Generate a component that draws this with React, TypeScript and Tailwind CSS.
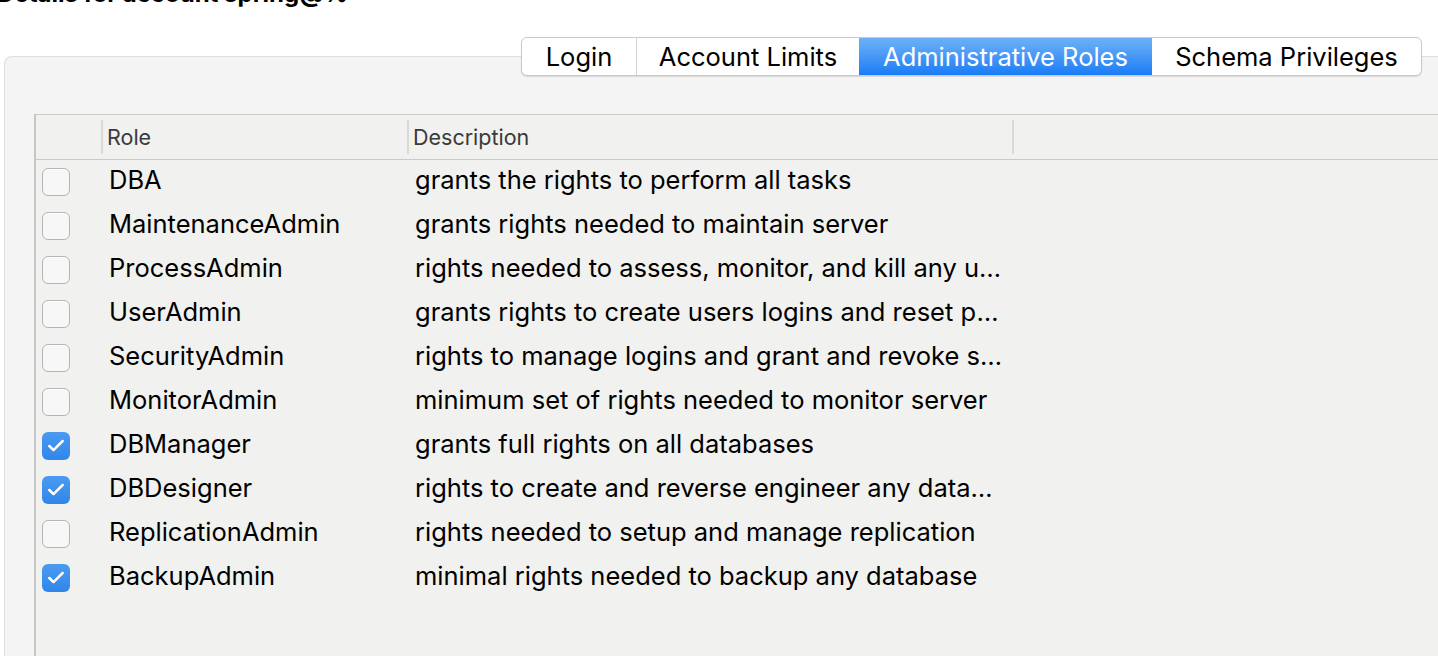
import { Check } from 'lucide-react'

const TABS = [
  { label: 'Login', w: 'w-[114px]' },
  { label: 'Account Limits', w: 'w-[223px]' },
  { label: 'Administrative Roles', w: 'w-[293px]' },
  { label: 'Schema Privileges', w: 'w-[269px]' },
]
const ACTIVE_TAB = 'Administrative Roles'

const ROLES = [
  { name: 'DBA', desc: 'grants the rights to perform all tasks', on: false },
  { name: 'MaintenanceAdmin', desc: 'grants rights needed to maintain server', on: false },
  { name: 'ProcessAdmin', desc: 'rights needed to assess, monitor, and kill any user process running in server', on: false },
  { name: 'UserAdmin', desc: 'grants rights to create users logins and reset passwords', on: false },
  { name: 'SecurityAdmin', desc: 'rights to manage logins and grant and revoke server and database level privileges', on: false },
  { name: 'MonitorAdmin', desc: 'minimum set of rights needed to monitor server', on: false },
  { name: 'DBManager', desc: 'grants full rights on all databases', on: true },
  { name: 'DBDesigner', desc: 'rights to create and reverse engineer any database schema', on: true },
  { name: 'ReplicationAdmin', desc: 'rights needed to setup and manage replication', on: false },
  { name: 'BackupAdmin', desc: 'minimal rights needed to backup any database', on: true },
]

function RoleCheckbox({ on }: { on: boolean }) {
  if (on) {
    return (
      <div className="w-[28px] h-[28px] rounded-[6px] bg-gradient-to-b from-[#4b9af0] to-[#2f86ea] flex items-center justify-center">
        <Check className="w-[20px] h-[20px] text-white" strokeWidth={3} />
      </div>
    )
  }
  return (
    <div className="w-[28px] h-[28px] rounded-[6px] border border-[#b5b5b5] bg-[#f7f7f7] shadow-[inset_0_1px_0_rgba(255,255,255,0.8)]" />
  )
}

function HeaderSep() {
  return <div className="w-[2px] h-[34px] bg-[#d9d9d7]" />
}

export default function App() {
  return (
    <div className="w-[1438px] h-[656px] overflow-hidden bg-white font-['Inter',sans-serif] text-black">
      <div className="h-[37px] -mt-[20px]">
        <div className="text-[24px] leading-[28px] font-bold -ml-[3px] whitespace-nowrap">
          Details for account spring@%
        </div>
      </div>

      <div className="mt-[20px] flex justify-end pr-[16px] relative z-10">
        <div className="flex h-[39px] rounded-[6px] border border-[#c9c9c9] bg-white shadow-[0_1px_1px_rgba(0,0,0,0.12)] overflow-hidden text-[25.5px]">
          {TABS.map((t, i) => {
            const active = t.label === ACTIVE_TAB
            const sep = i > 0 && !active && TABS[i - 1].label !== ACTIVE_TAB
            return (
              <div
                key={t.label}
                className={`${t.w} h-full flex items-center justify-center pt-[2px] ${
                  active
                    ? 'bg-gradient-to-b from-[#6cb1f6] to-[#167cf6] text-white'
                    : sep
                      ? 'border-l border-[#d3d3d3]'
                      : ''
                }`}
              >
                {t.label}
              </div>
            )
          })}
        </div>
      </div>

      <div className="-mt-[20px] ml-[4px] h-[620px] rounded-tl-[8px] border-l border-t border-[#dedede] bg-[#f4f4f4] pl-[29px] pt-[57px]">
        <div className="h-full border-l-2 border-t border-[#c6c6c4] border-t-[#cacac8] bg-[#f1f1ef]">
          <div className="h-[45px] flex items-center border-b border-[#cacac8] text-[21.5px] text-[#3a3a3a]">
            <div className="w-[65px]" />
            <HeaderSep />
            <div className="w-[304px] pl-[4px]">Role</div>
            <HeaderSep />
            <div className="w-[603px] pl-[4px]">Description</div>
            <HeaderSep />
          </div>
          {ROLES.map((r) => (
            <div key={r.name} className="h-[44px] flex items-center text-[25.5px]">
              <div className="w-[73px] pl-[6px] flex items-center">
                <RoleCheckbox on={r.on} />
              </div>
              <div className="w-[306px] whitespace-nowrap pb-[4px]">{r.name}</div>
              <div className="w-[590px] whitespace-nowrap overflow-hidden text-ellipsis pb-[4px]">{r.desc}</div>
            </div>
          ))}
        </div>
      </div>
    </div>
  )
}
